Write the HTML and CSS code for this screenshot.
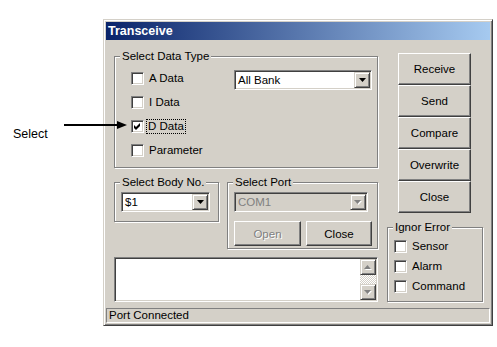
FILE: index.html
```html
<!doctype html>
<html>
<head>
    <meta charset="utf-8"/>
    <title>Transceive</title>
    <link rel="stylesheet" href="styles.css">
</head>
<body>
<div class="stage">
    <span class="note-label">Select</span>
    <svg class="note-arrow" width="64" height="10" viewBox="0 0 64 10"><rect x="0" y="4" width="56" height="2"/><polygon points="53,1 63,5 53,9"/></svg>

    <div class="window">
        <div class="titlebar">Transceive</div>
        <div class="client">
            <div class="panes">
                <div class="left">
                    <div class="group data-type">
                        <div class="group-title">Select Data Type</div>
                        <div class="group-body data-type-body">
                            <div class="checks">
                                <div class="check"><span class="box"></span><span>A Data</span></div>
                                <div class="check"><span class="box"></span><span>I Data</span></div>
                                <div class="check"><span class="box"><svg width="9" height="9" viewBox="0 0 9 9"><polygon points="1,3 3,5 7,1 7,4 3,8 1,6"/></svg></span><span class="focus">D Data</span></div>
                                <div class="check"><span class="box"></span><span>Parameter</span></div>
                            </div>
                            <div class="combo combo-bank">
                                <span class="combo-text">All Bank</span>
                                <span class="drop"><svg width="7" height="4" viewBox="0 0 7 4"><polygon points="0,0 7,0 3.5,4"/></svg></span>
                            </div>
                        </div>
                    </div>

                    <div class="row2">
                        <div class="group body-no">
                            <div class="group-title">Select Body No.</div>
                            <div class="group-body">
                                <div class="combo combo-body">
                                    <span class="combo-text">$1</span>
                                    <span class="drop"><svg width="7" height="4" viewBox="0 0 7 4"><polygon points="0,0 7,0 3.5,4"/></svg></span>
                                </div>
                            </div>
                        </div>
                        <div class="group port">
                            <div class="group-title">Select Port</div>
                            <div class="group-body">
                                <div class="combo combo-port disabled">
                                    <span class="combo-text">COM1</span>
                                    <span class="drop"><svg width="8" height="5" viewBox="0 0 8 5"><polygon points="1,1 8,1 4.5,5" fill="#fff"/><polygon points="0,0 7,0 3.5,4" fill="#808080"/></svg></span>
                                </div>
                                <div class="port-buttons">
                                    <div class="btn btn-open disabled">Open</div>
                                    <div class="btn btn-close">Close</div>
                                </div>
                            </div>
                        </div>
                    </div>

                    <div class="memo">
                        <div class="scroll">
                            <div class="sbtn"><svg width="8" height="5" viewBox="0 0 8 5"><polygon points="4.5,1 8,5 1,5" fill="#fff"/><polygon points="3.5,0 7,4 0,4" fill="#808080"/></svg></div>
                            <div class="track"></div>
                            <div class="sbtn"><svg width="8" height="5" viewBox="0 0 8 5"><polygon points="1,1 8,1 4.5,5" fill="#fff"/><polygon points="0,0 7,0 3.5,4" fill="#808080"/></svg></div>
                        </div>
                    </div>
                </div>

                <div class="right">
                    <div class="buttons">
                        <div class="btn">Receive</div>
                        <div class="btn">Send</div>
                        <div class="btn">Compare</div>
                        <div class="btn">Overwrite</div>
                        <div class="btn">Close</div>
                    </div>
                    <div class="group ignore">
                        <div class="group-title">Ignor Error</div>
                        <div class="group-body">
                            <div class="checks">
                                <div class="check"><span class="box"></span><span>Sensor</span></div>
                                <div class="check"><span class="box"></span><span>Alarm</span></div>
                                <div class="check"><span class="box"></span><span>Command</span></div>
                            </div>
                        </div>
                    </div>
                </div>
            </div>
            <div class="status">Port Connected</div>
        </div>
    </div>
</div>
</body>
</html>
```

FILE: styles.css
```css
body {
    margin: 0;
    background: #fff;
    font-family: "Liberation Sans", Arial, sans-serif;
    font-size: 11.5px;
    color: #000;
}
.stage {
    position: relative;
    padding: 19px 0 0 103px;
}
.note-label {
    position: absolute;
    left: 13px;
    top: 127px;
    font-size: 12.5px;
    line-height: 14px;
}
.note-arrow {
    position: absolute;
    left: 64px;
    top: 120px;
    z-index: 2;
}
.window {
    width: 390px;
    box-sizing: border-box;
    background: #d4d0c8;
    border: 1px solid;
    border-color: #d4d0c8 #404040 #404040 #d4d0c8;
    box-shadow: inset 1px 1px #fff, inset -1px -1px #808080;
    padding: 2px;
}
.titlebar {
    height: 18px;
    line-height: 18px;
    padding-left: 2px;
    color: #fff;
    font-weight: bold;
    font-size: 12.5px;
    background: linear-gradient(90deg, #0a246a, #a6caf0);
}
.panes {
    display: grid;
    grid-template-columns: 264px 96px;
    column-gap: 9px;
    padding-left: 8px;
    align-items: start;
}
.left {
    padding-top: 16px;
}
.right {
    padding-top: 13px;
}

/* group boxes */
.group {
    box-sizing: border-box;
    border: 1px solid #808080;
    box-shadow: inset 1px 1px #fff, 1px 1px #fff;
}
.group-title {
    width: fit-content;
    height: 13px;
    line-height: 13px;
    margin: -7px 0 -6px 5px;
    padding: 0 2px;
    background: #d4d0c8;
    white-space: nowrap;
}
.data-type {
    height: 112px;
}
.data-type-body {
    display: flex;
    align-items: flex-start;
    padding: 15px 0 0 16px;
}
.checks {
    display: flex;
    flex-direction: column;
    gap: 11px;
}
.data-type .checks {
    width: 103px;
}
.check {
    display: flex;
    align-items: center;
    gap: 5px;
    height: 13px;
    line-height: 13px;
    white-space: nowrap;
}
.box {
    width: 13px;
    height: 13px;
    flex: none;
    box-sizing: border-box;
    background: #fff;
    border: 1px solid;
    border-color: #808080 #fff #fff #808080;
    box-shadow: inset 1px 1px #404040, inset -1px -1px #d4d0c8;
    display: flex;
    align-items: center;
    justify-content: center;
}
.focus {
    border: 1px dotted #000;
    padding: 0 1px;
    margin-left: -3px;
    line-height: 13px;
}

/* combo boxes */
.combo {
    display: flex;
    height: 20px;
    box-sizing: border-box;
    background: #fff;
    border: 1px solid;
    border-color: #808080 #fff #fff #808080;
    box-shadow: inset 1px 1px #404040, inset -1px -1px #d4d0c8;
    padding: 1px;
}
.combo-text {
    flex: 1;
    padding-left: 2px;
    line-height: 16px;
    white-space: nowrap;
}
.drop {
    width: 16px;
    height: 16px;
    flex: none;
    box-sizing: border-box;
    background: #d4d0c8;
    border: 1px solid;
    border-color: #d4d0c8 #404040 #404040 #d4d0c8;
    box-shadow: inset 1px 1px #fff, inset -1px -1px #808080;
    display: flex;
    align-items: center;
    justify-content: center;
}
.combo-bank {
    width: 138px;
    margin-top: -2px;
}
.combo.disabled {
    background: #d4d0c8;
    color: #808080;
}

.row2 {
    display: flex;
    justify-content: space-between;
    align-items: flex-start;
    margin-top: 14px;
}
.body-no {
    width: 105px;
    height: 40px;
}
.body-no .group-body,
.port .group-body {
    padding: 9px 0 0 6px;
}
.combo-body {
    width: 89px;
}
.port {
    width: 151px;
    height: 67px;
}
.combo-port {
    width: 134px;
}
.port-buttons {
    display: flex;
    gap: 5px;
    margin-top: 9px;
}
.btn-open {
    width: 67px;
    height: 25px;
}
.btn-close {
    width: 66px;
    height: 25px;
}

/* buttons */
.btn {
    display: flex;
    align-items: center;
    justify-content: center;
    box-sizing: border-box;
    background: #d4d0c8;
    border: 1px solid;
    border-color: #fff #404040 #404040 #fff;
    box-shadow: inset -1px -1px #808080, inset 1px 1px #d4d0c8;
}
.btn.disabled {
    color: #808080;
    text-shadow: 1px 1px #fff;
}
.buttons {
    display: flex;
    flex-direction: column;
    width: 73px;
    margin-left: 11px;
}
.buttons .btn {
    height: 32px;
}

/* memo with scrollbar */
.memo {
    margin-top: 8px;
    height: 45px;
    box-sizing: border-box;
    display: flex;
    justify-content: flex-end;
    background: #fff;
    border: 1px solid;
    border-color: #808080 #fff #fff #808080;
    box-shadow: inset 1px 1px #404040, inset -1px -1px #d4d0c8;
    padding: 1px;
}
.scroll {
    width: 16px;
    display: flex;
    flex-direction: column;
}
.sbtn {
    height: 16px;
    box-sizing: border-box;
    background: #d4d0c8;
    border: 1px solid;
    border-color: #d4d0c8 #404040 #404040 #d4d0c8;
    box-shadow: inset 1px 1px #fff, inset -1px -1px #808080;
    display: flex;
    align-items: center;
    justify-content: center;
}
.track {
    flex: 1;
    background: repeating-conic-gradient(#fff 0 25%, #d4d0c8 0 50%) 0 0 / 2px 2px;
}

.ignore {
    margin-top: 14px;
    height: 75px;
}
.ignore .group-body {
    padding: 12px 0 0 6px;
}
.ignore .checks {
    gap: 7px;
}

.status {
    margin-top: 6px;
    height: 15px;
    box-sizing: border-box;
    border: 1px solid;
    border-color: #808080 #fff #fff #808080;
    padding-left: 2px;
    line-height: 13px;
    white-space: nowrap;
}
```
